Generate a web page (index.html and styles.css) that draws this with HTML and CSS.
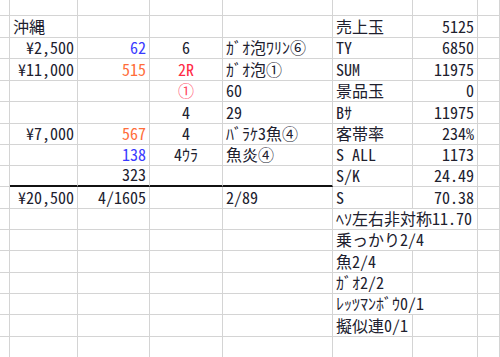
FILE: index.html
```html
<!DOCTYPE html>
<html lang="ja">
<head>
<meta charset="utf-8">
<link rel="stylesheet" href="styles.css">
</head>
<body>
<div class="sheet">
  <!-- row 0 -->
  <div class="c"></div><div class="c"></div><div class="c"></div><div class="c"></div><div class="c"></div><div class="c"></div><div class="c"></div><div class="c"></div>
  <!-- row 1 -->
  <div class="c"></div><div class="c">沖縄</div><div class="c"></div><div class="c"></div><div class="c"></div><div class="c">売上玉</div><div class="c r">5125</div><div class="c"></div>
  <!-- row 2 -->
  <div class="c"></div><div class="c r">¥2,500</div><div class="c r blue">62</div><div class="c m">6</div><div class="c">ｶﾞｵ泡ﾜﾘﾝ⑥</div><div class="c">TY</div><div class="c r">6850</div><div class="c"></div>
  <!-- row 3 -->
  <div class="c"></div><div class="c r">¥11,000</div><div class="c r orange">515</div><div class="c m red">2R</div><div class="c">ｶﾞｵ泡①</div><div class="c">SUM</div><div class="c r">11975</div><div class="c"></div>
  <!-- row 4 -->
  <div class="c"></div><div class="c"></div><div class="c"></div><div class="c m pink">①</div><div class="c">60</div><div class="c">景品玉</div><div class="c r">0</div><div class="c"></div>
  <!-- row 5 -->
  <div class="c"></div><div class="c"></div><div class="c"></div><div class="c m">4</div><div class="c">29</div><div class="c">Bｻ</div><div class="c r">11975</div><div class="c"></div>
  <!-- row 6 -->
  <div class="c"></div><div class="c r">¥7,000</div><div class="c r orange">567</div><div class="c m">4</div><div class="c">ﾊﾞﾗｹ3魚④</div><div class="c">客帯率</div><div class="c r">234%</div><div class="c"></div>
  <!-- row 7 -->
  <div class="c"></div><div class="c"></div><div class="c r blue">138</div><div class="c m">4ｳﾗ</div><div class="c">魚炎④</div><div class="c">S ALL</div><div class="c r">1173</div><div class="c"></div>
  <!-- row 8 -->
  <div class="c"></div><div class="c bk"></div><div class="c r bk">323</div><div class="c bk"></div><div class="c bk"></div><div class="c">S/K</div><div class="c r">24.49</div><div class="c"></div>
  <!-- row 9 -->
  <div class="c"></div><div class="c r">¥20,500</div><div class="c r">4/1605</div><div class="c"></div><div class="c">2/89</div><div class="c">S</div><div class="c r">70.38</div><div class="c"></div>
  <!-- row 10 -->
  <div class="c"></div><div class="c"></div><div class="c"></div><div class="c"></div><div class="c"></div><div class="c span2">ﾍｿ左右非対称11.70</div><div class="c"></div>
  <!-- row 11 -->
  <div class="c"></div><div class="c"></div><div class="c"></div><div class="c"></div><div class="c"></div><div class="c span2">乗っかり2/4</div><div class="c"></div>
  <!-- row 12 -->
  <div class="c"></div><div class="c"></div><div class="c"></div><div class="c"></div><div class="c"></div><div class="c">魚2/4</div><div class="c"></div><div class="c"></div>
  <!-- row 13 -->
  <div class="c"></div><div class="c"></div><div class="c"></div><div class="c"></div><div class="c"></div><div class="c">ｶﾞｵ2/2</div><div class="c"></div><div class="c"></div>
  <!-- row 14 -->
  <div class="c"></div><div class="c"></div><div class="c"></div><div class="c"></div><div class="c"></div><div class="c span2">ﾚｯﾂﾏﾝﾎﾞｳ0/1</div><div class="c"></div>
  <!-- row 15 -->
  <div class="c"></div><div class="c"></div><div class="c"></div><div class="c"></div><div class="c"></div><div class="c">擬似連0/1</div><div class="c"></div><div class="c"></div>
  <!-- row 16 -->
  <div class="c"></div><div class="c"></div><div class="c"></div><div class="c"></div><div class="c"></div><div class="c"></div><div class="c"></div><div class="c"></div>
</div>
</body>
</html>
```
FILE: styles.css
```css
html, body {
  margin: 0;
  padding: 0;
  background: #ffffff;
  overflow: hidden;
}
.sheet {
  display: grid;
  grid-template-columns: 10px 68px 72px 73px 110px 80px 65px 1fr;
  grid-template-rows: 16px 22px 21px 22px 21px 22px 21px 21px 21px 22px 21px 21px 22px 21px 21px 22px 21px;
  width: 500px;
  font-family: "Noto Sans CJK JP", sans-serif;
  font-size: 16px;
  font-feature-settings: "hwid" 1;
  color: #20202e;
}
.c {
  box-sizing: border-box;
  border-right: 1px solid #d4d4d4;
  border-bottom: 1px solid #d4d4d4;
  display: flex;
  align-items: flex-end;
  padding: 0 3px 3px 3px;
  line-height: 16px;
  white-space: nowrap;
  overflow: visible;
  min-width: 0;
}
.r { justify-content: flex-end; }
.m { justify-content: center; }
.span2 { grid-column: span 2; }
.bk { border-bottom: 2px solid #111111; }
.blue { color: #3a3aff; }
.orange { color: #ff6d3a; }
.red { color: #ff2a45; }
.pink { color: #ff4a66; }
```
